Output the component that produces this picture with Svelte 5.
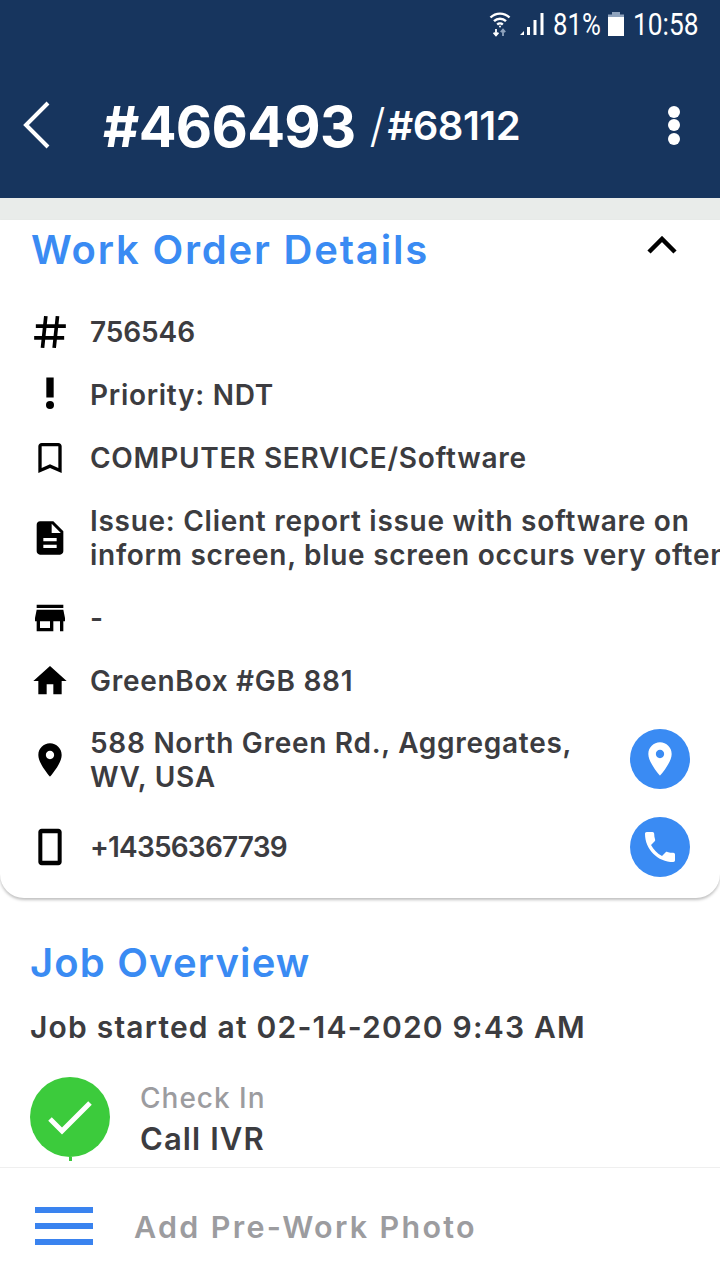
<script>
  const rows = [
    { icon: 'tag', lines: ['756546'], track: 'tight' },
    { icon: 'priority', lines: ['Priority: NDT'] },
    { icon: 'bookmark', lines: ['COMPUTER SERVICE/Software'] },
    { icon: 'doc', lines: ['Issue: Client report issue with software on', 'inform screen, blue screen occurs very often'] },
    { icon: 'store', lines: ['-'] },
    { icon: 'home', lines: ['GreenBox #GB 881'] },
    { icon: 'place', lines: ['588 North Green Rd., Aggregates,', 'WV, USA'], action: 'place' },
    { icon: 'mobile', lines: ['+14356367739'], action: 'call', track: 'digits' }
  ];

  const placePath = 'M12 2C8.13 2 5 5.13 5 9c0 5.25 7 13 7 13s7-7.75 7-13c0-3.87-3.13-7-7-7zm0 9.5c-1.38 0-2.5-1.12-2.5-2.5s1.12-2.5 2.5-2.5 2.5 1.12 2.5 2.5-1.12 2.5-2.5 2.5z';
  const callPath = 'M6.62 10.79c1.44 2.83 3.76 5.14 6.59 6.59l2.2-2.2c.27-.27.67-.36 1.02-.24 1.12.37 2.33.57 3.57.57.55 0 1 .45 1 1V20c0 .55-.45 1-1 1-9.39 0-17-7.61-17-17 0-.55.45-1 1-1h3.5c.55 0 1 .45 1 1 0 1.25.2 2.45.57 3.57.11.35.03.74-.25 1.02l-2.2 2.2z';
</script>

<div class="screen">
  <header class="appbar">
    <div class="status">
      <svg class="wifi" width="22" height="26" viewBox="0 0 22 26" fill="none" stroke="#fff" stroke-width="2.4">
        <path d="M1.5 6.5a13.5 13.5 0 0 1 19 0"/>
        <path d="M5 10.2a8.6 8.6 0 0 1 12 0"/>
        <path d="M8.2 13.6a4 4 0 0 1 5.6 0"/>
        <circle cx="11" cy="15.6" r="1" fill="#fff" stroke="none"/>
        <path d="M7 18v6M4.6 21.6L7 24.4l2.4-2.8" stroke-width="1.8"/>
        <path d="M14 25v-6M11.8 21.2L14 18.6l2.2 2.6" stroke="#8fa3bd" stroke-width="1.8"/>
      </svg>
      <svg class="signal" width="24" height="24" viewBox="0 0 24 24" fill="#fff">
        <path d="M0 23l4-4v4z"/>
        <rect x="7" y="15" width="3" height="8"/>
        <rect x="13.5" y="8" width="3" height="15"/>
        <rect x="20.5" y="1" width="3" height="22"/>
      </svg>
      <span class="pct">81%</span>
      <svg class="battery" width="16" height="24" viewBox="0 0 16 24">
        <path d="M4 0h8v2.500h4v4H0v-4h4z" fill="#8fa3bd"/>
        <rect x="0" y="5" width="16" height="19" fill="#fff"/>
      </svg>
      <span class="clock">10:58</span>
    </div>
    <div class="toolbar">
      <svg class="back" width="30" height="48" viewBox="0 0 30 48" fill="none" stroke="#fff" stroke-width="4">
        <path d="M26 2L4 24l22 22"/>
      </svg>
      <div class="ids">
        <span class="wo">#466493</span>
        <span class="slash">/</span><span class="sub">#68112</span>
      </div>
      <div class="kebab"><i></i><i></i><i></i></div>
    </div>
  </header>

  <div class="band"></div>

  <section class="card">
    <div class="card-head">
      <h2>Work Order Details</h2>
      <svg class="collapse" width="30" height="18" viewBox="0 0 30 18" fill="none" stroke="#000" stroke-width="4.500">
        <path d="M2 16L15 3l13 13"/>
      </svg>
    </div>

    {#each rows as row}
      <div class="row" class:call={row.action === 'call'} class:place={row.action === 'place'}>
        <svg class="icon" width="40" height="40" viewBox="0 0 24 24" fill="#000">
          {#if row.icon === 'tag'}
            <path d="M9.500 2.500L7.500 21.500M16.500 2.500L14.500 21.500M3.500 8.500H21.500M2.500 15.500H20.500" fill="none" stroke="#000" stroke-width="2.200"/>
          {:else if row.icon === 'priority'}
            <rect x="9.800" y="1.500" width="4.400" height="12"/>
            <circle cx="12" cy="18" r="2.400"/>
          {:else if row.icon === 'bookmark'}
            <path d="M17 3H7c-1.100 0-2 .9-2 2v16l7-3 7 3V5c0-1.100-.9-2-2-2zm0 15l-5-2.180L7 18V5h10v13z"/>
          {:else if row.icon === 'doc'}
            <path d="M14 2H6c-1.100 0-1.990.9-1.990 2L4 20c0 1.100.89 2 1.990 2H18c1.100 0 2-.9 2-2V8l-6-6zm2 16H8v-2h8v2zm0-4H8v-2h8v2zm-3-5V3.500L18.500 9H13z"/>
          {:else if row.icon === 'store'}
            <path d="M20 4H4v2h16V4zm1 10v-2l-1-5H4l-1 5v2h1v6h10v-6h4v6h2v-6h1zm-9 4H6v-4h6v4z"/>
          {:else if row.icon === 'home'}
            <path d="M10 20v-6h4v6h5v-8h3L12 3 2 12h3v8z"/>
          {:else if row.icon === 'place'}
            <path d={placePath}/>
          {:else if row.icon === 'mobile'}
            <path fill-rule="evenodd" d="M17 1.010L7 1c-1.100 0-2 .9-2 2v18c0 1.100.9 2 2 2h10c1.100 0 2-.9 2-2V3c0-1.100-.9-1.990-2-1.990zM16.600 20.200H7.400V3.800h9.200z"/>
          {/if}
        </svg>
        <div class="text {row.track ?? ''}">
          {#each row.lines as line}
            <div>{line}</div>
          {/each}
        </div>
        {#if row.action}
          <div class="round">
            <svg width="40" height="40" viewBox="0 0 24 24" fill="#fff">
              <path d={row.action === 'place' ? placePath : callPath}/>
            </svg>
          </div>
        {/if}
      </div>
    {/each}
  </section>

  <section class="overview">
    <h2>Job Overview</h2>
    <p class="started">Job started at 02-14-2020 9:43 AM</p>
    <div class="step">
      <div class="step-mark">
        <div class="step-dot">
          <svg width="80" height="80" viewBox="0 0 80 80" fill="none" stroke="#fff" stroke-width="5">
            <path d="M20 42l12 12 28-28"/>
          </svg>
        </div>
        <div class="step-line"></div>
      </div>
      <div class="step-text">
        <div class="step-kind">Check In</div>
        <div class="step-name">Call IVR</div>
      </div>
    </div>
  </section>

  <footer class="bottom">
    <div class="burger"><i></i><i></i><i></i></div>
    <span>Add Pre-Work Photo</span>
  </footer>
</div>

<style>
  :global(body) {
    margin: 0;
    background: #fff;
  }

  .screen {
    position: relative;
    width: 720px;
    height: 1280px;
    overflow: hidden;
    background: #fff;
    font-family: Inter, "Noto Sans", sans-serif;
    color: #3c3c40;
  }

  .appbar {
    height: 198px;
    background: #17355e;
    color: #fff;
  }

  .status {
    display: flex;
    align-items: center;
    justify-content: flex-end;
    height: 36px;
    padding: 6px 22px 0 0;
    font-family: Roboto, sans-serif;
    font-size: 31px;
  }

  .wifi {
    margin-right: 9px;
  }

  .signal {
    margin-right: 9px;
  }

  .pct {
    width: 48px;
    margin-right: 7px;
    white-space: nowrap;
    transform: scaleX(0.83);
    transform-origin: left center;
  }

  .battery {
    margin-right: 9px;
  }

  .clock {
    width: 65px;
    white-space: nowrap;
    transform: scaleX(0.85);
    transform-origin: left center;
  }

  .toolbar {
    display: flex;
    align-items: center;
    height: 100px;
    margin-top: 35px;
    padding: 0 40px 0 22px;
    box-sizing: border-box;
  }

  .back {
    flex: none;
    margin-top: -4px;
  }

  .ids {
    flex: 1;
    margin-left: 51px;
    white-space: nowrap;
    display: flex;
    align-items: center;
  }

  .wo {
    font-size: 56px;
    font-weight: 700;
    letter-spacing: -0.7px;
  }

  .slash {
    margin-left: 14px;
    margin-top: -4px;
    font-size: 46px;
    font-weight: 300;
    letter-spacing: 2px;
  }

  .sub {
    margin-top: -4px;
    font-size: 40px;
    font-weight: 600;
    letter-spacing: -0.5px;
  }

  .kebab {
    display: flex;
    flex-direction: column;
    gap: 1.500px;
    margin-top: -4px;
  }

  .kebab i {
    display: block;
    width: 12px;
    height: 12px;
    border-radius: 50%;
    background: #fff;
  }

  .band {
    height: 22px;
    background: #e9ecea;
  }

  .card {
    height: 678px;
    box-sizing: border-box;
    border-radius: 0 0 24px 24px;
    box-shadow: 0 2px 3px rgba(0, 0, 0, 0.25);
  }

  .card-head {
    display: flex;
    align-items: center;
    justify-content: space-between;
    height: 80px;
    padding: 0 43px 22px 31px;
    box-sizing: border-box;
  }

  .collapse {
    margin-bottom: 8px;
  }

  h2 {
    margin: 0;
    font-size: 40px;
    font-weight: 600;
    letter-spacing: 1.800px;
    color: #3a8bf3;
  }

  .overview h2 {
    letter-spacing: 1.150px;
  }

  .row {
    display: flex;
    align-items: center;
    min-height: 63px;
    padding: 0 30px;
    font-size: 28px;
    font-weight: 600;
    line-height: 34px;
    letter-spacing: 0.720px;
    white-space: nowrap;
  }

  .row.place {
    margin-top: -1px;
  }

  .row.place .round {
    margin-bottom: 2px;
  }

  .row.call {
    min-height: 77px;
  }

  .icon {
    flex: none;
    margin-right: 20px;
  }

  .text {
    flex: 1;
    min-width: 0;
    padding: 14.500px 0;
  }

  .text.tight {
    letter-spacing: -0.100px;
  }

  .text.digits {
    letter-spacing: -0.800px;
  }

  .round {
    flex: none;
    display: flex;
    align-items: center;
    justify-content: center;
    width: 60px;
    height: 60px;
    border-radius: 50%;
    background: #3a8bf3;
  }

  .overview {
    padding: 40px 30px 0;
  }

  .started {
    margin: 22px 0 0;
    font-size: 30px;
    font-weight: 600;
    line-height: 36px;
    letter-spacing: 1.200px;
  }

  .step {
    display: flex;
    gap: 30px;
    margin-top: 32px;
  }

  .step-mark {
    display: flex;
    flex-direction: column;
    align-items: center;
  }

  .step-dot {
    width: 80px;
    height: 80px;
    border-radius: 50%;
    background: #3ccb3c;
  }

  .step-line {
    width: 3px;
    height: 4px;
    background: #3ccb3c;
  }

  .step-kind {
    margin-top: 4px;
    font-size: 28px;
    font-weight: 500;
    line-height: 34px;
    letter-spacing: 1px;
    color: #9c9c9f;
  }

  .step-name {
    margin-top: 6px;
    font-size: 31px;
    font-weight: 600;
    line-height: 36px;
    letter-spacing: 1.100px;
  }

  .bottom {
    position: absolute;
    left: 0;
    right: 0;
    bottom: 0;
    display: flex;
    align-items: center;
    gap: 41px;
    height: 113px;
    box-sizing: border-box;
    padding: 4px 0 0 35px;
    background: #fff;
    border-top: 1px solid #efefef;
    font-size: 30.500px;
    font-weight: 600;
    letter-spacing: 2.300px;
    color: #9c9c9f;
  }

  .burger {
    display: flex;
    flex-direction: column;
    gap: 9.500px;
    width: 58px;
  }

  .burger i {
    display: block;
    height: 6.500px;
    background: #3a83ef;
  }
</style>
